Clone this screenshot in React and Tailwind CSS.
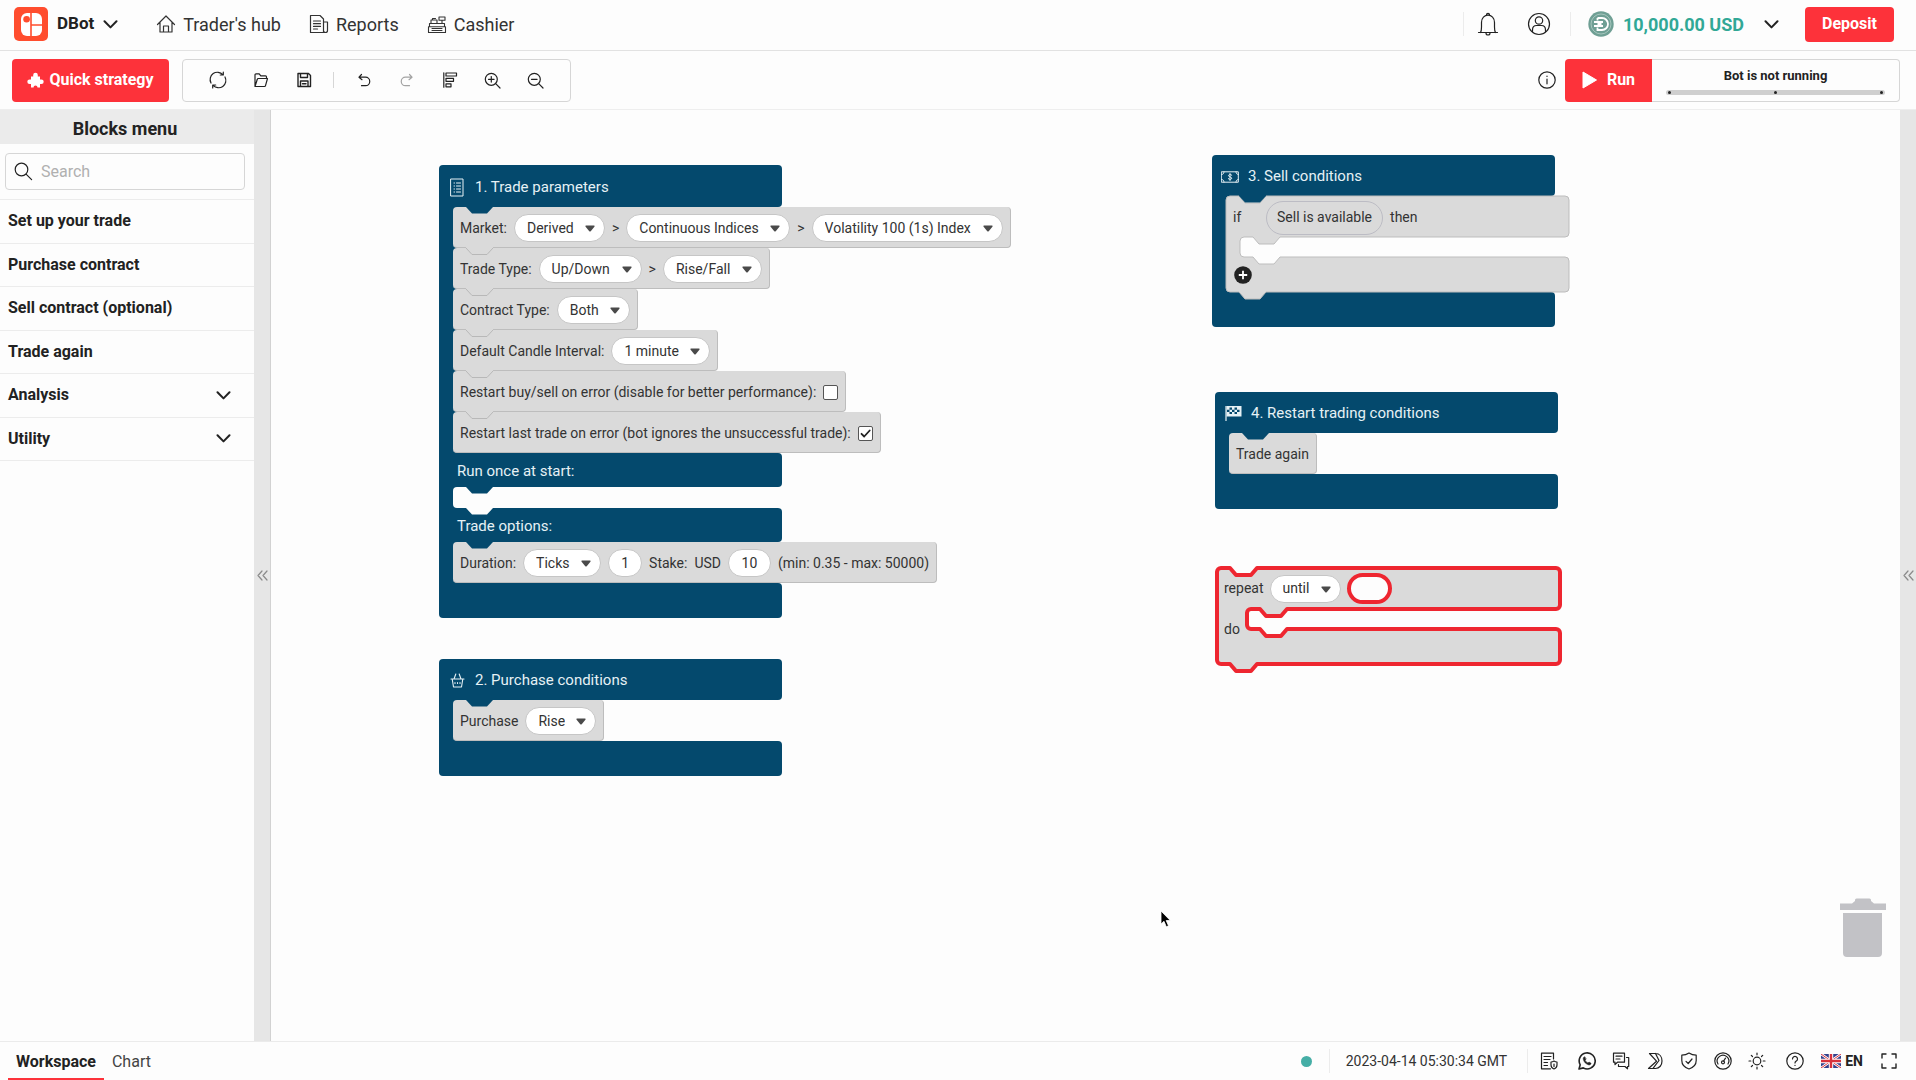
import React from 'react';

const Svg = ({ size = 18, w, h, vb = '0 0 18 18', sw = 1.2, className = '', children }) => (
  <svg
    width={w || size}
    height={h || size}
    viewBox={vb}
    fill="none"
    stroke="currentColor"
    strokeWidth={sw}
    strokeLinecap="round"
    strokeLinejoin="round"
    aria-hidden="true"
    className={`shrink-0 ${className}`}
  >
    {children}
  </svg>
);

const Chevron = ({ w = 15 }) => (
  <Svg w={w} h={9} vb="0 0 15 9" sw={2}>
    <path d="M1.5 1.2 7.5 7.4 13.5 1.2" />
  </Svg>
);

/* ---------- header ---------- */

const Logo = () => (
  <svg width="34" height="34" viewBox="0 0 34 34" aria-hidden="true" className="shrink-0">
    <rect width="34" height="34" rx="5" fill="#ff4d2e" />
    <rect x="7" y="6" width="21" height="23" rx="6" fill="#fff" />
    <path d="M17 6v23M17 18h11" stroke="#ff4d2e" strokeWidth="1.6" />
    <circle cx="12.6" cy="12.3" r="3.3" fill="#ff4d2e" />
  </svg>
);

const HomeIcon = () => (
  <Svg size={20} vb="0 0 20 20">
    <path d="M1.5 10.5 10 2l8.500 8.500M4 8.500V18h12V8.500M7.500 18v-6h5v6" />
  </Svg>
);
const ReportIcon = () => (
  <Svg size={20} vb="0 0 20 20">
    <path d="M1.500 1.500h9.500l3.500 3.500v13.500h-13zM14.500 8h4v8.500a2 2 0 0 1-4 0M4.500 7h7M4.500 9.700h7M4.500 12.400h7M4.500 15h4" />
  </Svg>
);
const CashierIcon = () => (
  <Svg size={20} vb="0 0 20 20" sw={1.1}>
    <path d="M2.500 9.500h15v3.200h-15zM1.500 12.700h17v5.800h-17zM12 3h6v3.200h-6zM15 6.200v3M4 9.500V6h6v3.500M5 14.500h10M5 16.500h10M5.500 6V4.500h3" />
  </Svg>
);
const BellIcon = () => (
  <Svg w={22} h={26} vb="0 0 22 26">
    <path d="M1.500 21.500h19M3.500 21.500c1-1.500 1-3 1-5.500v-4.500C4.500 7 7.500 4.200 11 4.200s6.500 2.800 6.500 7.300V16c0 2.500 0 4 1 5.500M9.500 3.800a1.500 1.500 0 1 1 3 0M9 22a2 2 0 0 0 4 0" />
  </Svg>
);
const UserIcon = () => (
  <Svg size={24} vb="0 0 24 24">
    <circle cx="12" cy="12" r="10.500" />
    <circle cx="12" cy="8.500" r="3.700" />
    <path d="M5.500 19.500v-1.500c0-3 2-4.500 4-4.500h5c2 0 4 1.500 4 4.500v1.500" />
  </Svg>
);
const Coin = () => (
  <svg width="26" height="26" viewBox="0 0 26 26" fill="none" aria-hidden="true" className="shrink-0">
    <circle cx="13" cy="13" r="12.700" fill="#6f9f94" />
    <circle cx="13" cy="13" r="10" stroke="#a5c6bd" strokeWidth="1" />
    <path d="M9.500 7h4.500a6 6 0 0 1 0 12H9.500v-2.500M9.500 7v2.500M6 11h9M6 15h9M9.500 13h4" stroke="#fff" strokeWidth="1.800" />
  </svg>
);

const NAV = [
  ["Trader's hub", HomeIcon],
  ['Reports', ReportIcon],
  ['Cashier', CashierIcon],
];

function Header() {
  return (
    <header className="flex h-[51px] items-center border-b border-[#e2e2e2] pr-[22px] pl-[14px] pb-[2px]">
      <button className="flex items-center gap-[9px] text-[17px] font-bold">
        <Logo />
        DBot
        <Chevron />
      </button>
      <nav className="ml-[38px] flex gap-7 text-[18px] text-[#333]">
        {NAV.map(([label, Icon]) => (
          <a key={label} href="#" className="flex items-center gap-[7px]">
            <Icon />
            {label}
          </a>
        ))}
      </nav>
      <div className="ml-auto flex items-center">
        <span className="h-6 w-px bg-[#ececec]" />
        <button aria-label="Notifications" className="ml-[13px]">
          <BellIcon />
        </button>
        <button aria-label="Account" className="ml-7">
          <UserIcon />
        </button>
        <span className="ml-[19px] h-6 w-px bg-[#ececec]" />
        <button className="ml-[17px] flex items-center text-[18px] font-bold text-[#31a896]">
          <Coin />
          <span className="ml-[9px]">10,000.00 USD</span>
          <span className="ml-5 text-[#222]">
            <Chevron />
          </span>
        </button>
        <button className="ml-[26px] h-[35px] w-[89px] rounded bg-[#fd323a] text-[16px] font-bold text-white">
          Deposit
        </button>
      </div>
    </header>
  );
}

/* ---------- toolbar ---------- */

const RefreshIcon = () => (
  <Svg>
    <path d="M2 12A7.300 7.300 0 0 1 13.800 3.600M16 6a7.300 7.300 0 0 1-11.800 8.400M14.300 1v3h-3M3.700 17v-3h3" />
  </Svg>
);
const OpenIcon = () => (
  <Svg size={16} vb="0 0 16 16">
    <path d="M2 14.500V2.800A1 1 0 0 1 3 1.800h3.200l1.600 2h4.700a1 1 0 0 1 1 1V6.500M2 14.500 4.300 7.300a1 1 0 0 1 1-.8h9.200L12.500 13.700a1 1 0 0 1-1 .8z" />
  </Svg>
);
const SaveIcon = () => (
  <Svg size={16} vb="0 0 16 16" sw={1.4}>
    <path d="M2 1.500h10.500l2 2v11H2zM4.500 1.500v4h7v-4M4.500 14.500V9h7.500v5.500M6.500 11.700h3.500" />
  </Svg>
);
const UndoIcon = () => (
  <Svg size={14} vb="0 0 14 14">
    <path d="M4.500 1.500 2 4.200l3 2.500M2.300 4.200h6.200a4.200 4.200 0 0 1 0 8.500H4.500" />
  </Svg>
);
const RedoIcon = () => (
  <Svg size={14} vb="0 0 14 14" className="text-[#a3a3a3]">
    <path d="M9.500 1.500 12 4.200l-3 2.500M11.700 4.200H5.500a4.200 4.200 0 0 0 0 8.500h4" />
  </Svg>
);
const SortIcon = () => (
  <Svg size={16} vb="0 0 16 16">
    <path d="M1.800.8v14.400M4 1h10.500v3H4zM4 6.300h7.500v3H4zM4 11.800h5v3H4z" />
  </Svg>
);
const ZoomIcon = ({ plus }) => (
  <Svg size={17} vb="0 0 17 17">
    <circle cx="7.300" cy="7.300" r="6" />
    <path d="m11.700 11.700 4.300 4.300M4.500 7.300h5.600" />
    {plus && <path d="M7.300 4.500v5.600" />}
  </Svg>
);
const ZoomIn = () => <ZoomIcon plus />;
const ZoomOut = () => <ZoomIcon />;

const ToolButton = ({ label, icon: Icon }) => (
  <button aria-label={label} className="flex h-full w-[43px] items-center justify-center">
    <Icon />
  </button>
);

function Toolbar() {
  return (
    <div className="flex h-[59px] items-center border-b border-[#eeeeee] pr-4 pl-3">
      <button className="flex h-[43px] w-[157px] items-center justify-center gap-[5px] rounded bg-[#fd323a] text-[16px] font-bold whitespace-nowrap text-white">
        <svg width="17" height="16" viewBox="0 0 17 16" fill="currentColor" aria-hidden="true">
          <path d="M6.200 4.500V3A2.300 2.300 0 0 1 10.800 3V4.500H13V7.500H14.400A2.300 2.300 0 0 1 14.400 12.100H13V15.500H10.500A2 2 0 0 0 6.500 15.500H4V12.100H2.600A2.300 2.300 0 0 1 2.600 7.500H4V4.500Z" />
        </svg>
        Quick strategy
      </button>
      <div className="ml-[13px] flex h-[43px] items-center rounded border border-[#d6d6d6] px-[13px]">
        <ToolButton label="Reset" icon={RefreshIcon} />
        <ToolButton label="Import" icon={OpenIcon} />
        <ToolButton label="Save" icon={SaveIcon} />
        <span className="mx-2 h-4 w-px bg-[#d6d6d6]" />
        <ToolButton label="Undo" icon={UndoIcon} />
        <ToolButton label="Redo" icon={RedoIcon} />
        <ToolButton label="Sort blocks" icon={SortIcon} />
        <ToolButton label="Zoom in" icon={ZoomIn} />
        <ToolButton label="Zoom out" icon={ZoomOut} />
      </div>
      <button aria-label="Information" className="ml-auto">
        <Svg>
          <circle cx="9" cy="9" r="8.200" />
          <path d="M9 8v4.800M9 5.200v.3" />
        </Svg>
      </button>
      <button className="ml-[9px] flex h-[43px] w-[87px] items-center justify-center gap-[10px] rounded-l bg-[#fd323a] text-[16px] font-bold text-white">
        <svg width="15" height="18" viewBox="0 0 15 18" fill="currentColor" aria-hidden="true">
          <path d="M1 1 14.500 9 1 17z" stroke="currentColor" strokeLinejoin="round" />
        </svg>
        Run
      </button>
      <div className="flex h-[43px] w-[248px] flex-col justify-between rounded-r border border-l-0 border-[#d6d6d6] px-[14px] pt-[7px] pb-[6px]">
        <span className="text-center text-[13px] leading-[18px] font-bold">Bot is not running</span>
        <div className="flex h-[5px] items-center justify-between rounded-full bg-[#cfcfcf] px-[2px]">
          <i className="size-[3px] rounded-full bg-[#222]" />
          <i className="size-[3px] rounded-full bg-[#222]" />
          <i className="size-[3px] rounded-full bg-[#222]" />
        </div>
      </div>
    </div>
  );
}

/* ---------- side bar ---------- */

const MENU = [
  ['Set up your trade'],
  ['Purchase contract'],
  ['Sell contract (optional)'],
  ['Trade again'],
  ['Analysis', true],
  ['Utility', true],
];

const Handle = ({ label, className }) => (
  <button
    aria-label={label}
    className={`flex items-center justify-center overflow-hidden bg-[#e6e6e6] text-[#8a8a8a] ${className}`}
  >
    <Svg w={11} h={11} vb="0 0 11 11">
      <path d="M5 1 1 5.500 5 10M10 1 6 5.500 10 10" />
    </Svg>
  </button>
);

function Sidebar() {
  return (
    <aside className="flex shrink-0">
      <div className="w-[254px]">
        <h2 className="flex h-[34px] items-center justify-center bg-[#ebebeb] pt-[3px] pr-1 text-[18px] font-bold">
          Blocks menu
        </h2>
        <div className="border-b border-[#ececec] pt-[9px] pr-[9px] pb-[9px] pl-[5px]">
          <label className="flex h-[37px] items-center gap-2 rounded border border-[#d6d6d6] pl-2">
            <Svg size={19} vb="0 0 19 19">
              <circle cx="7.500" cy="7.500" r="6.300" />
              <path d="m12.300 12.300 5.300 5.300" />
            </Svg>
            <input
              aria-label="Search"
              placeholder="Search"
              className="min-w-0 flex-1 bg-transparent text-[16px] outline-none placeholder:text-[#b0b0b0]"
            />
          </label>
        </div>
        <div className="grid h-[261px] grid-rows-6">
          {MENU.map(([label, open]) => (
            <button
              key={label}
              className="flex items-center justify-between border-b border-[#ececec] pr-[23px] pl-2 text-left text-[16px] font-bold"
            >
              {label}
              {open && <Chevron />}
            </button>
          ))}
        </div>
      </div>
      <Handle label="Collapse blocks menu" className="w-[17px] border-r border-[#d2d2d2]" />
    </aside>
  );
}

/* ---------- blocks ---------- */

const Notch = ({ dark, className = '' }) => (
  <svg
    width="27"
    height="8"
    viewBox="0 0 27 8"
    aria-hidden="true"
    className={`absolute -top-px left-[13px] ${className}`}
  >
    <path
      d="M0 0 V1 L6 7.500 H21 L27 1 V0Z"
      className={dark ? 'fill-[#04496d]' : 'fill-[#dadada]'}
    />
    {!dark && <path d="M0 1 L6 7.500 H21 L27 1" fill="none" stroke="#b8b8b8" />}
  </svg>
);

/* Pull-down field shown as a white pill. */
const Pick = ({ label, value }) => (
  <span className="relative inline-flex">
    <select
      aria-label={label}
      className="h-7 appearance-none rounded-full border border-[#c6c6c6] bg-white pr-[30px] pl-3 text-[14px] outline-none"
    >
      <option>{value}</option>
    </select>
    <svg width="10" height="7" viewBox="0 0 10 7" aria-hidden="true" className="pointer-events-none absolute top-[11px] right-[10px]">
      <path d="M.8.500h8.400q.8.500.2 1.300L5.700 6.200q-.7.700-1.400 0L.6 1.800Q0 1 .8.500z" fill="#4a4a4a" />
    </svg>
  </span>
);

const Num = ({ label, value, className }) => (
  <input
    aria-label={label}
    defaultValue={value}
    className={`h-7 rounded-full border border-[#c6c6c6] bg-white text-center text-[14px] outline-none ${className}`}
  />
);

const Row = ({ first, children }) => (
  <div className="relative flex h-[41px] items-center gap-[7px] rounded border-r border-b border-[#bdbdbd] bg-[#dadada] px-[7px] pt-[2px] text-[14px] whitespace-nowrap text-[#333]">
    <Notch dark={first} />
    {children}
  </div>
);

const Statements = ({ children }) => (
  <div className="flex flex-col items-start bg-[linear-gradient(to_right,#04496d_18px,transparent_18px)] pl-[14px]">
    {children}
  </div>
);

const EmptySlot = () => (
  <div className="relative h-[21px] w-[326px] rounded-l bg-[#fdfdfd]">
    <Notch dark />
    <svg width="27" height="8" viewBox="0 0 27 8" aria-hidden="true" className="absolute top-5 left-[13px] z-10">
      <path d="M0 0V1L6 7.500H21L27 1V0Z" fill="#fdfdfd" />
    </svg>
  </div>
);

const Bar = ({ className = '', children }) => (
  <div className={`flex w-[343px] items-center bg-[#04496d] pt-[2px] text-[15px] text-[#e6f1f5] ${className}`}>
    {children}
  </div>
);

const Block = ({ title, icon, head = 'h-[41px]', className, children }) => (
  <section className={`absolute ${className}`}>
    <Bar className={`rounded-t rounded-br ${head}`}>
      <span className="ml-[9px] flex w-[18px] justify-center">{icon}</span>
      <h3 className="ml-[9px]">{title}</h3>
    </Bar>
    {children}
    <Bar className="h-[35px] rounded-tr rounded-b" />
  </section>
);

/* Outline of a C-shaped block whose inner slot starts at x = s. */
const cShape = (s) =>
  `M4 0H13l6 7h15l6-7H339a4 4 0 0 1 4 4V37a4 4 0 0 1-4 4H${s + 40}l-6 7h-15l-6-7H${s + 4}a4 4 0 0 0-4 4V57a4 4 0 0 0 4 4H${
    s + 13
  }l6 7h15l6-7H339a4 4 0 0 1 4 4V92a4 4 0 0 1-4 4H40l-6 7h-15l-6-7H4a4 4 0 0 1-4-4V4a4 4 0 0 1 4-4z`;

const CBlock = ({ slot, stroke, width, nested, children }) => (
  <div className="relative z-10 h-24 w-[343px] text-[14px] text-[#333]">
    <svg width="343" height="104" viewBox="0 0 343 104" aria-hidden="true" className="absolute inset-0 overflow-visible">
      <path d={cShape(slot)} fill="#dadada" stroke={stroke} strokeWidth={width} strokeLinejoin="round" />
    </svg>
    {nested && <Notch dark />}
    <div className="relative">{children}</div>
  </div>
);

const ListIcon = () => (
  <Svg w={14} h={19} vb="0 0 14 19" sw={1}>
    <path d="M1 1h12v17H1zM4 5h.5M6.500 5h4M4 8h.5M6.500 8h4M4 11h.5M6.500 11h4M4 14h.5M6.500 14h4" />
  </Svg>
);
const BasketIcon = () => (
  <Svg w={15} h={15} vb="0 0 15 15" sw={1.1}>
    <path d="M1 6h13M2.200 6l1.300 8h8l1.300-8M4 6l1.800-5M11 6 9.200 1M5 9.500v1M7.500 9.500v1M10 9.500v1" />
  </Svg>
);
const CashIcon = () => (
  <Svg w={18} h={12} vb="0 0 18 12" sw={1}>
    <path d="M.7.800h16.600v10.400H.7zM.7 3.500C2 3.500 3 2.500 3 .8M17.300 3.500C16 3.500 15 2.500 15 .8M.7 8.500c1.300 0 2.300 1 2.300 2.700M17.300 8.500c-1.300 0-2.300 1-2.300 2.700M10.800 4.200C9.500 3 7.500 3.500 7.500 4.700c0 1.500 3.200 1 3.200 2.500 0 1.300-2 1.800-3.400.5M9 2.500v7" />
  </Svg>
);
const FlagIcon = () => (
  <svg width="17" height="17" viewBox="0 0 17 17" aria-hidden="true" className="shrink-0">
    <path d="M1 1v15" stroke="#e6f1f5" strokeWidth="1.200" />
    <path d="M1.500 1H16.500V11.500H1.500z" fill="#e6f1f5" />
    <path
      d="M4.500 2.500h2.500v2.200h-2.500zM9.500 2.500H12v2.200H9.500zM2 4.700h2.500v2.200H2zM7 4.700h2.500v2.200H7zM12 4.700h2.500v2.200H12zM4.500 6.900h2.500v2.200h-2.500zM9.500 6.900H12v2.200H9.500z"
      fill="#04496d"
    />
  </svg>
);

function Canvas() {
  return (
    <main className="relative min-h-[931px] min-w-0 flex-1 overflow-hidden">
      <Block title="1. Trade parameters" icon={<ListIcon />} head="h-[42px]" className="top-[55px] left-[168px]">
        <Statements>
          <Row first>
            <span>Market:</span>
            <Pick label="Market" value="Derived" />
            <span>&gt;</span>
            <Pick label="Submarket" value="Continuous Indices" />
            <span>&gt;</span>
            <Pick label="Symbol" value="Volatility 100 (1s) Index" />
          </Row>
          <Row>
            <span>Trade Type:</span>
            <Pick label="Trade category" value="Up/Down" />
            <span>&gt;</span>
            <Pick label="Trade type" value="Rise/Fall" />
          </Row>
          <Row>
            <span>Contract Type:</span>
            <Pick label="Contract type" value="Both" />
          </Row>
          <Row>
            <span>Default Candle Interval:</span>
            <Pick label="Default candle interval" value="1 minute" />
          </Row>
          <Row>
            <label htmlFor="restart-buy">Restart buy/sell on error (disable for better performance):</label>
            <input
              id="restart-buy"
              type="checkbox"
              className="size-[15px] appearance-none rounded-[2px] border border-[#555] bg-white"
            />
          </Row>
          <Row>
            <label htmlFor="restart-last">Restart last trade on error (bot ignores the unsuccessful trade):</label>
            <span className="relative flex">
              <input
                id="restart-last"
                type="checkbox"
                defaultChecked
                className="size-[15px] appearance-none rounded-[2px] border border-[#555] bg-white"
              />
              <Svg size={15} vb="0 0 15 15" sw={1.8} className="pointer-events-none absolute inset-0 text-[#222]">
                <path d="m3.500 7.800 2.700 2.700L11.700 4.500" />
              </Svg>
            </span>
          </Row>
        </Statements>
        <Bar className="h-[34px] rounded-r pl-[18px]">Run once at start:</Bar>
        <Statements>
          <EmptySlot />
        </Statements>
        <Bar className="h-[34px] rounded-r pl-[18px]">Trade options:</Bar>
        <Statements>
          <Row first>
            <span>Duration:</span>
            <Pick label="Duration unit" value="Ticks" />
            <Num label="Duration" value="1" className="w-[34px]" />
            <span>Stake:</span>
            <span>USD</span>
            <Num label="Stake" value="10" className="w-[43px]" />
            <span>(min: 0.35 - max: 50000)</span>
          </Row>
        </Statements>
      </Block>

      <Block title="2. Purchase conditions" icon={<BasketIcon />} className="top-[549px] left-[168px]">
        <Statements>
          <Row first>
            <span>Purchase</span>
            <Pick label="Purchase" value="Rise" />
          </Row>
        </Statements>
      </Block>

      <Block title="3. Sell conditions" icon={<CashIcon />} className="top-[45px] left-[941px]">
        <Statements>
          <CBlock nested slot={14} stroke="#bdbdbd" width={1}>
            <div className="flex h-[41px] items-center pt-[2px] pl-[7px]">
              <span className="w-[33px]">if</span>
              <span className="flex h-[34px] items-center rounded-full border border-[#bcbcc4] px-[10px]">
                Sell is available
              </span>
              <span className="ml-[7px]">then</span>
            </div>
            <button aria-label="Add else branch" className="mt-[29px] ml-2 block">
              <svg width="18" height="18" viewBox="0 0 18 18" aria-hidden="true">
                <circle cx="9" cy="9" r="8.800" fill="#222" />
                <path d="M9 4.800v8.400M4.800 9h8.400" stroke="#fff" strokeWidth="1.800" />
              </svg>
            </button>
          </CBlock>
        </Statements>
      </Block>

      <Block title="4. Restart trading conditions" icon={<FlagIcon />} className="top-[282px] left-[944px]">
        <Statements>
          <Row first>
            <span>Trade again</span>
          </Row>
        </Statements>
      </Block>

      <section className="absolute top-[458px] left-[946px]">
        <CBlock slot={30} stroke="#ee2630" width={4}>
          <div className="flex h-[41px] items-center gap-[6px] pl-[7px]">
            <span>repeat</span>
            <Pick label="Repeat mode" value="until" />
            <span className="h-[31px] w-[45px] rounded-full border-4 border-[#ee2630] bg-[#fdfdfd]" />
          </div>
          <div className="flex h-[41px] items-center pl-[7px]">do</div>
        </CBlock>
      </section>

      <svg width="46" height="60" viewBox="0 0 46 60" aria-hidden="true" className="absolute right-[14px] bottom-[83px]">
        <path
          d="M0 5.500H12L15 3V2q0-1.500 1.500-1.500h13Q31 .5 31 2v1l3 2.500H46V12H0zM3 15H42V55q0 4-4 4H7q-4 0-4-4z"
          fill="#c2c2c6"
        />
      </svg>
      <svg width="12" height="18" viewBox="0 0 12 18" aria-hidden="true" className="absolute top-[800px] left-[889px]">
        <path d="M1 1V14L4 11.300 6.300 16.800 8.500 15.800 6.200 10.500H10.300z" fill="#000" stroke="#fff" strokeWidth=".8" />
      </svg>
    </main>
  );
}

/* ---------- footer ---------- */

const STATUS = [
  [
    'Account limits',
    <path d="M13.500 7V1.200H1.500v15.600h9M4 4.500h7M4 7.500h6M4 10.500h3.500M4 13.500h3.500M14 9c-1 .7-2 1-3 1v3c0 2 1.300 3.300 3 4 1.700-.7 3-2 3-4v-3c-1 0-2-.3-3-1zM14 12v2.500" />,
  ],
  [
    'WhatsApp',
    <>
      <path d="M1 17l1.200-4.200A8 8 0 1 1 5.300 15.900z" strokeWidth="1.600" />
      <path
        d="M6.500 4.800c-1 .3-1.500 1.400-1.200 2.500.6 2.800 2.800 5 5.500 5.600 1.200.2 2.200-.5 2.300-1.600L11 10l-1 1c-1.300-.5-2.300-1.500-2.900-2.800l.9-1z"
        fill="currentColor"
        strokeWidth="0.500"
      />
    </>,
  ],
  [
    'Live chat',
    <path d="M1.500 1.200h11v9H5.500L3 12.500v-2.300H1.500zM4 4.200h6M4 7h4M14.500 5.500h2.200v9h-1.200v2.300l-2.500-2.300H6.500v-1.800" />,
  ],
  ['Deriv', <path d="M3.500 1.500h6C13.800 1.500 16 5 16 9s-2.500 7.500-6.500 7.500H2.500L10.500 9.200zM9.500 1.500 13 8.500 7 16.300" />],
  [
    'Responsible trading',
    <path d="M9 1C6.700 2.600 4.300 3.200 1.800 3.200v5.300c0 4 2.700 7 7.200 8.500 4.500-1.500 7.200-4.500 7.200-8.500V3.200C13.700 3.200 11.300 2.600 9 1zM6 9.300l2.200 2.200L12 7" />,
  ],
  [
    'Speed',
    <>
      <circle cx="9" cy="9" r="8.2" />
      <path d="M4 12A5.800 5.800 0 1 1 14 12M9.600 9 11.500 6.200" />
      <circle cx="9" cy="10.300" r="1.500" />
    </>,
  ],
  [
    'Theme',
    <>
      <circle cx="9" cy="9" r="3.800" />
      <path d="M9 1v1.800M9 15.200V17M1 9h1.800M15.200 9H17M3.300 3.300l1.200 1.200M13.500 13.500l1.200 1.200M3.300 14.700l1.200-1.200M13.500 4.500l1.200-1.200" />
    </>,
  ],
  [
    'Help',
    <>
      <circle cx="9" cy="9" r="8.200" />
      <path d="M6.500 7a2.500 2.500 0 1 1 3.800 2.100C9.300 9.700 9 10 9 11M9 13.300v.2" />
    </>,
  ],
];

const UkFlag = () => (
  <svg width="20" height="14" viewBox="0 0 20 14" aria-hidden="true">
    <rect width="20" height="14" rx="1.500" fill="#34408c" />
    <path d="M0 0 20 14M20 0 0 14" stroke="#fff" strokeWidth="2.600" />
    <path d="M0 0 20 14M20 0 0 14" stroke="#d8323c" strokeWidth="1" />
    <path d="M10 0V14M0 7H20" stroke="#fff" strokeWidth="4.400" />
    <path d="M10 0V14M0 7H20" stroke="#d8323c" strokeWidth="2.400" />
  </svg>
);

function Footer() {
  return (
    <footer className="flex h-[39px] items-stretch border-t border-[#ebebeb] pr-[19px] pl-2">
      <button className="border-b-2 border-[#fd323a] px-2 pt-[3px] text-[16px] font-bold">Workspace</button>
      <button className="border-b-2 border-transparent px-2 pt-[3px] text-[16px] text-[#444]">Chart</button>
      <div className="ml-auto flex items-center">
        <span className="size-[11px] rounded-full bg-[#45aea6]" />
        <span className="ml-[17px] h-6 w-px bg-[#ececec]" />
        <time className="ml-4 text-[14px] text-[#333]">2023-04-14 05:30:34 GMT</time>
        <span className="mr-1 ml-5 h-6 w-px bg-[#ececec]" />
        {STATUS.map(([label, drawing], i) => (
          <button
            key={label}
            aria-label={label}
            className={`flex w-[34px] justify-center ${i === 0 ? 'mr-1' : ''} ${i === 7 ? 'ml-1' : ''}`}
          >
            <Svg>{drawing}</Svg>
          </button>
        ))}
        <button className="ml-[9px] flex items-center gap-1 text-[14px] font-bold">
          <UkFlag />
          EN
        </button>
        <button aria-label="Full screen" className="ml-[18px]">
          <Svg size={16} vb="0 0 16 16" sw={1.4}>
            <path d="M1 5V1h4M11 1h4v4M15 11v4h-4M5 15H1v-4" />
          </Svg>
        </button>
      </div>
    </footer>
  );
}

export default function App() {
  return (
    <div className="flex min-h-screen flex-col bg-[#fdfdfd] font-[Roboto,sans-serif] text-[#222]">
      <Header />
      <Toolbar />
      <div className="flex flex-1">
        <Sidebar />
        <Canvas />
        <Handle label="Open run panel" className="w-4 shrink-0" />
      </div>
      <Footer />
    </div>
  );
}
